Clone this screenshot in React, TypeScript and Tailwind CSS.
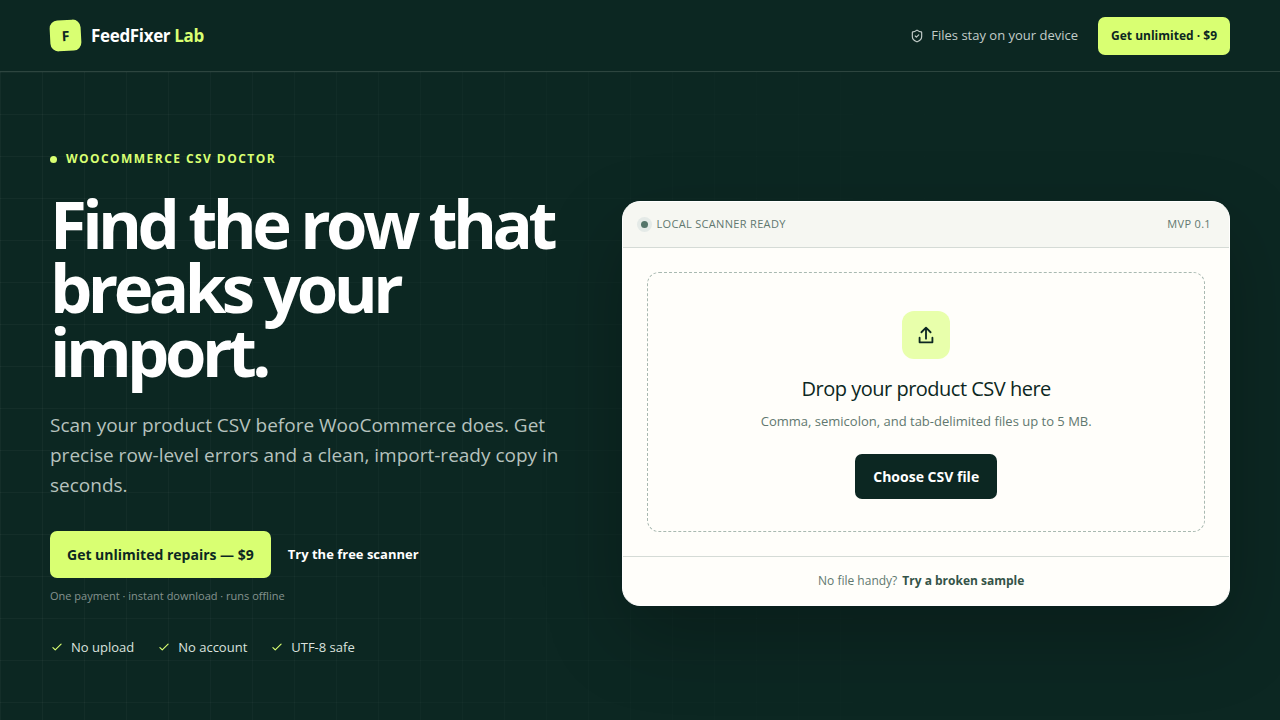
import { ShieldCheck } from "lucide-react";

const PERKS = ["No upload", "No account", "UTF-8 safe"];

function Header() {
  return (
    <header className="border-b border-[#2d453f]">
      <div className="mx-auto flex h-[71px] max-w-[1180px] items-center justify-between">
        <a href="#top" className="flex items-center gap-[10px] text-[17px] font-bold tracking-[-0.02em] text-white">
          <span className="grid size-[31px] -rotate-3 place-items-center rounded-lg bg-[#d9ff72] text-sm text-[#0c2722]">
            F
          </span>
          <span>
            FeedFixer <span className="text-[#d9ff72]">Lab</span>
          </span>
        </a>
        <div className="flex items-center gap-5">
          <span className="flex items-center gap-[7px] text-[13px] text-[#c3cdca]">
            <ShieldCheck size={14} />
            Files stay on your device
          </span>
          <a
            href="#pricing"
            className="flex h-[38px] items-center rounded-[7px] bg-[#d9ff72] px-[13px] text-xs font-bold text-[#0c2722]"
          >
            Get unlimited · $9
          </a>
        </div>
      </div>
    </header>
  );
}

function Intro() {
  return (
    <div>
      <p className="flex items-center gap-[9px] text-xs leading-4 font-bold tracking-[0.12em] text-[#d9ff72] uppercase">
        <span className="size-[7px] rounded-full bg-[#d9ff72]" />
        WooCommerce CSV Doctor
      </p>
      <h1 className="mt-6 text-[67px] leading-[64px] font-bold tracking-[-0.068em] text-white">
        Find the row that breaks your import.
      </h1>
      <p className="mt-[27px] text-[19px] leading-[30px] text-[#b6c2be]">
        Scan your product CSV before WooCommerce does. Get precise row-level errors and a clean, import-ready copy in
        seconds.
      </p>
      <div className="mt-[31px] flex items-center gap-[17px]">
        <a
          href="#pricing"
          className="flex h-[47px] items-center rounded-[7px] bg-[#d9ff72] px-[17px] text-sm font-bold text-[#0c2722]"
        >
          Get unlimited repairs — $9
        </a>
        <a href="#scanner" className="text-[13px] font-bold text-white">
          Try the free scanner
        </a>
      </div>
      <p className="mt-[10px] text-[11px] leading-4 text-[#85938f]">One payment · instant download · runs offline</p>
      <ul className="mt-[34px] flex gap-[23px] text-[13px] leading-[18px] text-[#dbe2df]">
        {PERKS.map((perk) => (
          <li key={perk} className="flex items-center gap-[7px]">
            <svg width="14" height="14" viewBox="0 0 24 24" fill="none" stroke="#d9ff72" strokeWidth="2">
              <path d="m5 13 4 4L19 7" strokeLinecap="round" strokeLinejoin="round" />
            </svg>
            {perk}
          </li>
        ))}
      </ul>
    </div>
  );
}

function Scanner() {
  return (
    <section
      id="scanner"
      className="overflow-hidden rounded-[18px] border border-white bg-[#fffefa] shadow-[0_30px_80px_rgba(0,0,0,0.24)]"
    >
      <div className="flex h-[46px] items-center justify-between border-b border-[#d5dbd6] bg-[#f6f7f2] px-[18px] text-[11px] text-[#61786f]">
        <span className="flex items-center gap-2 tracking-[0.03em]">
          <span className="size-[7px] rounded-full bg-[#54756a] ring-4 ring-[#e4eae7]" />
          LOCAL SCANNER READY
        </span>
        <span className="tracking-[0.03em]">MVP 0.1</span>
      </div>

      <div className="p-6">
        <div className="flex flex-col items-center rounded-xl border border-dashed border-[#a9b9b1] px-6 pt-[38px] pb-8 text-center">
          <span className="grid size-12 place-items-center rounded-xl bg-[#e8ffab] text-[#0c2722]">
            <svg width="22" height="22" viewBox="0 0 24 24" fill="none" stroke="currentColor" strokeWidth="2">
              <path d="M12 16V4M7 9l5-5 5 5M5 15v5h14v-5" strokeLinecap="round" strokeLinejoin="round" />
            </svg>
          </span>
          <h2 className="mt-4 text-xl leading-7 tracking-[-0.025em] text-[#0c2722]">Drop your product CSV here</h2>
          <p className="mt-2 text-[13px] leading-5 text-[#61786f]">
            Comma, semicolon, and tab-delimited files up to 5 MB.
          </p>
          <button
            type="button"
            className="mt-[23px] h-[45px] cursor-pointer rounded-[7px] bg-[#0c2722] px-[18px] text-sm font-bold text-white"
          >
            Choose CSV file
          </button>
        </div>
      </div>

      <div className="flex h-[49px] items-center justify-center gap-[5px] border-t border-[#d5dbd6] pr-[10px] text-xs text-[#61786f]">
        No file handy?
        <button type="button" className="cursor-pointer font-bold text-[#345347]">
          Try a broken sample
        </button>
      </div>
    </section>
  );
}

export default function App() {
  return (
    <div id="top" className="min-h-screen bg-[#0c2722] font-['Open_Sans',sans-serif]">
      <Header />
      <main className="relative isolate">
        {/* faint 42px grid that fades out to the right */}
        <div className="absolute inset-0 -z-10 bg-[linear-gradient(rgba(255,255,255,0.035)_1px,transparent_1px),linear-gradient(90deg,rgba(255,255,255,0.035)_1px,transparent_1px)] mask-[linear-gradient(90deg,black,transparent_80%)] bg-size-[42px_42px]" />
        <div className="mx-auto grid max-w-[1180px] grid-cols-[0.85fr_1fr] items-center gap-14 py-[79px]">
          <Intro />
          <Scanner />
        </div>
      </main>
    </div>
  );
}
